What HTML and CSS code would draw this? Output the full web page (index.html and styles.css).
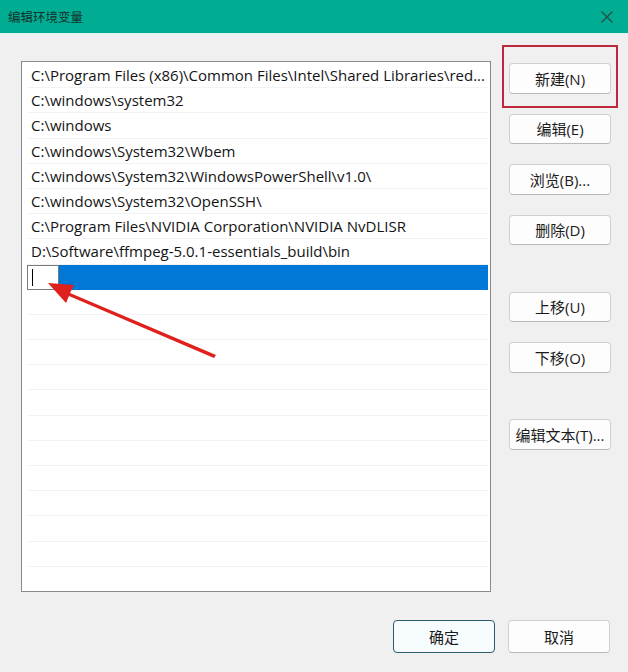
FILE: index.html
```html
<!DOCTYPE html>
<html lang="zh-CN">
<head>
<meta charset="utf-8">
<title>编辑环境变量</title>
<link rel="stylesheet" href="styles.css">
</head>
<body>
<div class="dialog">
  <div class="titlebar">
    <span class="title">编辑环境变量</span>
    <svg class="close" width="14" height="14" viewBox="0 0 14 14"><path d="M1.5 1.5 L12.5 12.5 M12.5 1.5 L1.5 12.5" stroke="#2a4a44" stroke-width="1.2" fill="none"/></svg>
  </div>
  <div class="content">
    <div class="listbox">
      <div class="row">C:\Program Files (x86)\Common Files\Intel\Shared Libraries\red...</div>
      <div class="row">C:\windows\system32</div>
      <div class="row">C:\windows</div>
      <div class="row">C:\windows\System32\Wbem</div>
      <div class="row">C:\windows\System32\WindowsPowerShell\v1.0\</div>
      <div class="row">C:\windows\System32\OpenSSH\</div>
      <div class="row">C:\Program Files\NVIDIA Corporation\NVIDIA NvDLISR</div>
      <div class="row">D:\Software\ffmpeg-5.0.1-essentials_build\bin</div>
      <div class="row selected"><span class="editbox"><span class="caret"></span></span></div>
      <div class="row"></div>
      <div class="row"></div>
      <div class="row"></div>
      <div class="row"></div>
      <div class="row"></div>
      <div class="row"></div>
      <div class="row"></div>
      <div class="row"></div>
      <div class="row"></div>
      <div class="row"></div>
      <div class="row"></div>
      <div class="row"></div>
    </div>
    <div class="buttons">
      <button class="btn">新建(N)</button>
      <button class="btn">编辑(E)</button>
      <button class="btn">浏览(B)...</button>
      <button class="btn">删除(D)</button>
      <button class="btn gap-lg">上移(U)</button>
      <button class="btn">下移(O)</button>
      <button class="btn gap-xl">编辑文本(T)...</button>
    </div>
  </div>
  <div class="footer">
    <button class="btn default">确定</button>
    <button class="btn">取消</button>
  </div>
  <div class="highlight"></div>
  <svg class="arrow" width="628" height="672" viewBox="0 0 628 672">
    <path d="M216 355 L70 293 L74 285 L48 283 L66 303 L69 296 L214 358 Z" fill="#e0201c"/>
  </svg>
</div>
</body>
</html>
```

FILE: styles.css
```css
* { box-sizing: border-box; }
html, body { margin: 0; padding: 0; }
body {
  width: 628px;
  height: 672px;
  background: #f0f0f0;
  font-family: "Segoe UI", "Open Sans", "Noto Sans CJK SC", sans-serif;
  font-size: 15px;
  color: #141414;
  overflow: hidden;
}
.dialog {
  position: relative;
  width: 628px;
  height: 672px;
  display: flex;
  flex-direction: column;
}
.titlebar {
  height: 35px;
  background: #00ad93;
  border-bottom: 2px solid #e6f2ef;
  display: flex;
  align-items: center;
  justify-content: space-between;
  padding: 0 14px 0 8px;
}
.title {
  font-family: "Noto Sans CJK SC", sans-serif;
  font-size: 12.5px;
  color: #15302a;
}
.close { display: block; }
.content {
  display: flex;
  padding: 26px 0 0 21px;
  gap: 18px;
}
.listbox {
  width: 470px;
  height: 531px;
  background: #ffffff;
  border: 1px solid #8a8a8a;
  padding: 1px 2px 0 5px;
  overflow: hidden;
}
.row {
  height: 25.2px;
  line-height: 25px;
  padding-left: 4px;
  border-bottom: 1px solid #f3f3f3;
  white-space: nowrap;
  overflow: hidden;
  font-size: 15px;
}
.row.selected {
  background: #0078d7;
  padding-left: 0;
  display: flex;
  align-items: stretch;
  border-bottom: 0;
}
.editbox {
  width: 32px;
  background: #ffffff;
  border: 1px solid #7a7a7a;
  display: flex;
  align-items: center;
  padding-left: 4px;
}
.caret {
  width: 1px;
  height: 17px;
  background: #000;
}
.buttons {
  display: flex;
  flex-direction: column;
  align-items: flex-start;
  padding-top: 2px;
  gap: 20px;
}
.btn {
  width: 102px;
  height: 30.5px;
  background: #fdfdfd;
  border: 1px solid #d0d0d0;
  border-bottom-color: #b8b8b8;
  border-radius: 4px;
  font-family: "Segoe UI", "Open Sans", "Noto Sans CJK SC", sans-serif;
  font-size: 15px;
  color: #1a1a1a;
  padding: 0;
}
.gap-lg { margin-top: 26.5px; }
.gap-xl { margin-top: 26.5px; }
.footer {
  display: flex;
  justify-content: flex-end;
  gap: 13px;
  padding: 28px 18px 0 0;
}
.footer .btn { height: 33px; }
.btn.default {
  border: 1.5px solid #2b5b70;
  background: #f6fbfd;
}
.highlight {
  position: absolute;
  left: 502px;
  top: 45px;
  width: 116px;
  height: 63px;
  border: 2px solid #c0283c;
  pointer-events: none;
}
.arrow {
  position: absolute;
  left: 0;
  top: 0;
  pointer-events: none;
}
```
